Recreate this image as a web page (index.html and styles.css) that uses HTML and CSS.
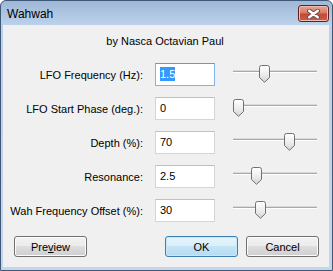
FILE: index.html
```html
<!DOCTYPE html>
<html lang="en">
<head>
  <meta charset="UTF-8">
  <title>Wahwah</title>
  <link rel="stylesheet" href="styles.css">
</head>
<body>
  <div class="window">
    <div class="titlebar">
      <span class="title">Wahwah</span>
      <span class="close">
        <svg width="13" height="10" viewBox="0 0 13 10">
          <path d="M2.2,1.8 L10.8,8.2 M10.8,1.8 L2.2,8.2" stroke="#6a4a4a" stroke-width="4.2" stroke-linecap="round"/>
          <path d="M2.2,1.8 L10.8,8.2 M10.8,1.8 L2.2,8.2" stroke="#fff" stroke-width="2.4" stroke-linecap="round"/>
        </svg>
      </span>
    </div>
    <div class="client">
      <div class="author">by Nasca Octavian Paul</div>
      <div class="params">
        <div class="row">
          <span class="label">LFO Frequency (Hz):</span>
          <div class="field focused"><span class="sel">1.5</span></div>
          <div class="slider"><div class="track"></div><svg class="thumb" style="left:26px" width="11" height="18" viewBox="0 0 11 18"><use href="#thumb"/></svg></div>
        </div>
        <div class="row">
          <span class="label">LFO Start Phase (deg.):</span>
          <div class="field">0</div>
          <div class="slider"><div class="track"></div><svg class="thumb" style="left:0px" width="11" height="18" viewBox="0 0 11 18"><use href="#thumb"/></svg></div>
        </div>
        <div class="row">
          <span class="label">Depth (%):</span>
          <div class="field">70</div>
          <div class="slider"><div class="track"></div><svg class="thumb" style="left:51px" width="11" height="18" viewBox="0 0 11 18"><use href="#thumb"/></svg></div>
        </div>
        <div class="row">
          <span class="label">Resonance:</span>
          <div class="field">2.5</div>
          <div class="slider"><div class="track"></div><svg class="thumb" style="left:18px" width="11" height="18" viewBox="0 0 11 18"><use href="#thumb"/></svg></div>
        </div>
        <div class="row">
          <span class="label">Wah Frequency Offset (%):</span>
          <div class="field">30</div>
          <div class="slider"><div class="track"></div><svg class="thumb" style="left:22px" width="11" height="18" viewBox="0 0 11 18"><use href="#thumb"/></svg></div>
        </div>
      </div>
      <div class="buttons">
        <button class="btn">Pre<u>v</u>iew</button>
        <button class="btn default">OK</button>
        <button class="btn">Cancel</button>
      </div>
    </div>
  </div>

  <svg width="0" height="0" class="defs">
    <defs>
      <linearGradient id="thumbFill" x1="0" y1="0" x2="0" y2="1">
        <stop offset="0" stop-color="#ffffff"/>
        <stop offset="0.55" stop-color="#ececec"/>
        <stop offset="1" stop-color="#d2d2d2"/>
      </linearGradient>
      <path id="thumb" d="M0.5,2.5 Q0.5,0.5 2.5,0.5 H8.5 Q10.5,0.5 10.5,2.5 V12.5 L5.5,17.3 L0.5,12.5 Z" fill="url(#thumbFill)" stroke="#707070" stroke-width="1"/>
    </defs>
  </svg>
</body>
</html>
```

FILE: styles.css
```css
body {
  margin: 0;
  background: #fff;
  font-family: 'Liberation Sans', Arial, sans-serif;
  font-size: 11px;
  color: #000;
}
.defs {
  position: absolute;
}
.window {
  width: 333px;
  height: 271px;
  box-sizing: border-box;
  border: 1px solid #3f5877;
  border-radius: 6px 6px 0 0;
  background: linear-gradient(#9fb8d7 0px, #bcd1ea 24px, #c2d6ec 100%);
  display: flex;
  flex-direction: column;
}
.titlebar {
  height: 24px;
  display: flex;
  align-items: flex-start;
  justify-content: space-between;
  padding: 0 3px 0 6px;
}
.title {
  font-size: 12px;
  margin-top: 6px;
  color: #000;
}
.close {
  margin-top: 4px;
  width: 31px;
  height: 17px;
  box-sizing: border-box;
  border: 1px solid #5e2222;
  border-radius: 3px;
  background: linear-gradient(#e7a697 0%, #d77a66 45%, #c24a36 55%, #c8604a 100%);
  box-shadow: inset 0 0 0 1px #eebcb0;
  display: flex;
  align-items: center;
  justify-content: center;
}
.client {
  flex: 1;
  margin: 0 3px 3px 2px;
  background: #f0f0f0;
  display: flex;
  flex-direction: column;
}
.author {
  text-align: center;
  padding-top: 9px;
  line-height: 15px;
  padding-right: 2px;
}
.params {
  margin-top: 14px;
  display: flex;
  flex-direction: column;
  gap: 11px;
}
.row {
  display: flex;
  align-items: center;
  height: 23px;
}
.label {
  width: 140px;
  text-align: right;
}
.field {
  margin-left: 12px;
  width: 60px;
  height: 23px;
  box-sizing: border-box;
  border: 1px solid #d5d5d5;
  border-top-color: #c0c0c0;
  background: #fff;
  padding-left: 4px;
  line-height: 20px;
}
.field.focused {
  border-color: #7eb4ea;
  border-top-color: #569de5;
}
.sel {
  background: #3399ff;
  color: #fff;
  padding: 1px 0;
}
.slider {
  position: relative;
  margin-left: 18px;
  width: 84px;
  height: 23px;
}
.track {
  position: absolute;
  left: 0;
  right: 0;
  top: 8px;
  height: 1px;
  background: #a8a8a8;
  border-bottom: 1px solid #fff;
  box-shadow: 0 -1px 0 #dadada;
}
.thumb {
  position: absolute;
  top: 2px;
}
.buttons {
  margin-top: 14px;
  display: flex;
  gap: 8px;
  padding: 0 10px 0 11px;
}
.btn {
  width: 73px;
  height: 21px;
  font-family: inherit;
  font-size: 11px;
  color: #000;
  border: 1px solid #707070;
  border-radius: 3px;
  background: linear-gradient(#f2f2f2 0%, #ebebeb 50%, #dddddd 50%, #cfcfcf 100%);
  box-shadow: inset 0 0 0 1px #fcfcfc;
  padding: 0;
}
.btn:first-child {
  margin-right: auto;
}
.btn.default {
  border-color: #3c7fb1;
  background: linear-gradient(#e5f4fc 0%, #d9eefa 50%, #c5e4f6 50%, #b6dbf1 100%);
  box-shadow: inset 0 0 0 1px #c8e8f9;
}
```
